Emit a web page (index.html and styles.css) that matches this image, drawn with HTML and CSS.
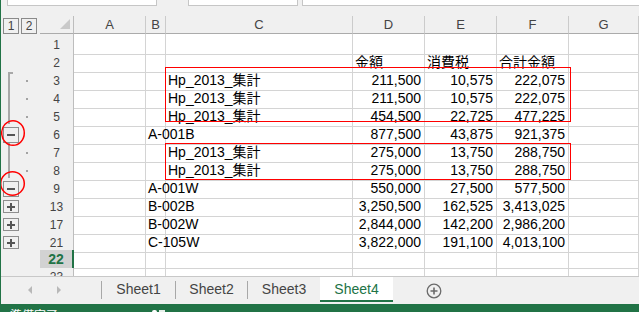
FILE: index.html
```html
<!DOCTYPE html>
<html lang="ja">
<head>
<meta charset="utf-8">
<title>Sheet4</title>
<link rel="stylesheet" href="styles.css">
</head>
<body>
<div class="app">
  <div class="topbar">
    <div class="fld f1"></div>
    <div class="fld f2"></div>
    <div class="fld f3"></div>
  </div>

  <div class="sheet">
    <div class="row hdr">
      <div class="ol levels"><span class="lvl">1</span><span class="lvl">2</span></div>
      <div class="corner"><span class="tri"></span></div>
      <div class="ch">A</div><div class="ch">B</div><div class="ch">C</div><div class="ch">D</div><div class="ch">E</div><div class="ch">F</div><div class="ch">G</div>
    </div>

    <div class="row">
      <div class="ol"></div><div class="rh">1</div>
      <div class="c"></div><div class="c"></div><div class="c"></div><div class="c"></div><div class="c"></div><div class="c"></div><div class="c"></div>
    </div>
    <div class="row">
      <div class="ol"></div><div class="rh">2</div>
      <div class="c"></div><div class="c"></div><div class="c"></div><div class="c">金額</div><div class="c">消費税</div><div class="c">合計金額</div><div class="c"></div>
    </div>
    <div class="row">
      <div class="ol"><span class="ln start"></span><span class="dot"></span></div><div class="rh">3</div>
      <div class="c"></div><div class="c"></div><div class="c">Hp_2013_集計</div><div class="c n">211,500</div><div class="c n">10,575</div><div class="c n">222,075</div><div class="c"></div>
    </div>
    <div class="row">
      <div class="ol"><span class="ln"></span><span class="dot"></span></div><div class="rh">4</div>
      <div class="c"></div><div class="c"></div><div class="c">Hp_2013_集計</div><div class="c n">211,500</div><div class="c n">10,575</div><div class="c n">222,075</div><div class="c"></div>
    </div>
    <div class="row">
      <div class="ol"><span class="ln"></span><span class="dot"></span></div><div class="rh">5</div>
      <div class="c"></div><div class="c"></div><div class="c">Hp_2013_集計</div><div class="c n">454,500</div><div class="c n">22,725</div><div class="c n">477,225</div><div class="c"></div>
    </div>
    <div class="row">
      <div class="ol"><span class="btn minus"><i class="h"></i></span></div><div class="rh">6</div>
      <div class="c"></div><div class="c">A-001B</div><div class="c"></div><div class="c n">877,500</div><div class="c n">43,875</div><div class="c n">921,375</div><div class="c"></div>
    </div>
    <div class="row">
      <div class="ol"><span class="ln"></span><span class="dot"></span></div><div class="rh">7</div>
      <div class="c"></div><div class="c"></div><div class="c">Hp_2013_集計</div><div class="c n">275,000</div><div class="c n">13,750</div><div class="c n">288,750</div><div class="c"></div>
    </div>
    <div class="row">
      <div class="ol"><span class="ln"></span><span class="dot"></span></div><div class="rh">8</div>
      <div class="c"></div><div class="c"></div><div class="c">Hp_2013_集計</div><div class="c n">275,000</div><div class="c n">13,750</div><div class="c n">288,750</div><div class="c"></div>
    </div>
    <div class="row">
      <div class="ol"><span class="btn minus"><i class="h"></i></span></div><div class="rh">9</div>
      <div class="c"></div><div class="c">A-001W</div><div class="c"></div><div class="c n">550,000</div><div class="c n">27,500</div><div class="c n">577,500</div><div class="c"></div>
    </div>
    <div class="row">
      <div class="ol"><span class="btn plus"><i class="h"></i><i class="v"></i></span></div><div class="rh">13</div>
      <div class="c"></div><div class="c">B-002B</div><div class="c"></div><div class="c n">3,250,500</div><div class="c n">162,525</div><div class="c n">3,413,025</div><div class="c"></div>
    </div>
    <div class="row">
      <div class="ol"><span class="btn plus"><i class="h"></i><i class="v"></i></span></div><div class="rh">17</div>
      <div class="c"></div><div class="c">B-002W</div><div class="c"></div><div class="c n">2,844,000</div><div class="c n">142,200</div><div class="c n">2,986,200</div><div class="c"></div>
    </div>
    <div class="row">
      <div class="ol"><span class="btn plus"><i class="h"></i><i class="v"></i></span></div><div class="rh">21</div>
      <div class="c"></div><div class="c">C-105W</div><div class="c"></div><div class="c n">3,822,000</div><div class="c n">191,100</div><div class="c n">4,013,100</div><div class="c"></div>
    </div>
    <div class="row">
      <div class="ol"></div><div class="rh sel">22</div>
      <div class="c"></div><div class="c"></div><div class="c"></div><div class="c"></div><div class="c"></div><div class="c"></div><div class="c"></div>
    </div>
    <div class="row">
      <div class="ol"></div><div class="rh r23">23</div>
      <div class="c"></div><div class="c"></div><div class="c"></div><div class="c"></div><div class="c"></div><div class="c"></div><div class="c"></div>
    </div>

    <svg class="marks" width="639" height="260" viewBox="0 0 639 260">
      <rect x="164.5" y="51.5" width="405" height="54" fill="none" stroke="#ff0000" stroke-width="1"/>
      <rect x="164.5" y="127.5" width="405" height="36" fill="none" stroke="#ff0000" stroke-width="1"/>
      <ellipse cx="12" cy="117" rx="11.3" ry="12.3" fill="none" stroke="#ff0000" stroke-width="1.5"/>
      <ellipse cx="11.5" cy="167.5" rx="11.8" ry="11.8" fill="none" stroke="#ff0000" stroke-width="1.5"/>
    </svg>
  </div>

  <div class="tabs">
    <div class="nav"><span class="arr left"></span><span class="arr right"></span></div>
    <span class="sep"></span>
    <div class="tab t1">Sheet1</div>
    <span class="sep"></span>
    <div class="tab t2">Sheet2</div>
    <span class="sep"></span>
    <div class="tab t3">Sheet3</div>
    <div class="tab active">Sheet4</div>
    <svg class="add" width="16" height="16" viewBox="0 0 16 16"><circle cx="8" cy="8" r="6.8" fill="none" stroke="#6b6b6b" stroke-width="1.3"/><path d="M8 4.5v7M4.5 8h7" stroke="#6b6b6b" stroke-width="1.6"/></svg>
  </div>

  <div class="status">
    <span class="ready">準備完了</span>
    <span class="sicon"><i></i><i></i></span>
  </div>
</div>
</body>
</html>
```

FILE: styles.css
```css
* { box-sizing: border-box; }

body {
  margin: 0;
  font-family: "Liberation Sans", "Noto Sans CJK JP", sans-serif;
}

.app {
  width: 639px;
  height: 312px;
  overflow: hidden;
  border-left: 1px solid #217346;
  background: #f0f0f0;
  display: flex;
  flex-direction: column;
}

/* top strip with the bottoms of the name box / formula bar */
.topbar {
  height: 16px;
  flex: none;
  display: flex;
  align-items: flex-start;
  padding-left: 6px;
}
.fld {
  height: 6px;
  background: #fff;
  border: 1px solid #c6c6c6;
  border-top: none;
}
.f1 { width: 150px; }
.f2 { width: 110px; margin-left: 31px; }
.f3 { flex: 1; margin-left: 4px; border-right: none; }

/* grid */
.sheet {
  position: relative;
  height: 260px;
  flex: none;
  overflow: hidden;
}
.row {
  display: grid;
  grid-template-columns: 39px 34px 72px 20px 187px 72px 72px 72px 70px;
  height: 18px;
  background: #fff;
}
.row.hdr { background: #f0f0f0; }

.ch {
  border-right: 1px solid #cbcbcb;
  border-bottom: 1px solid #ababab;
  text-align: center;
  font-size: 13px;
  line-height: 17px;
  color: #444;
}
.corner {
  border-right: 1px solid #bdbdbd;
  border-bottom: 1px solid #ababab;
  display: flex;
  justify-content: flex-end;
  align-items: flex-end;
  padding: 0 3px 4px 0;
}
.tri {
  width: 0;
  height: 0;
  border-left: 10px solid transparent;
  border-bottom: 10px solid #c9c9c9;
}
.levels {
  display: flex;
  align-items: flex-start;
  gap: 2px;
  padding: 1px 0 0 2px;
}
.lvl {
  width: 16px;
  height: 16px;
  border: 1px solid #8a8a8a;
  font-size: 12px;
  line-height: 14px;
  text-align: center;
  color: #444;
}

.ol {
  background: #f0f0f0;
  display: flex;
  align-items: center;
}
.ln {
  align-self: stretch;
  width: 5px;
  margin-left: 7px;
  border-left: 2px solid #a8a8a8;
}
.ln.start {
  margin-top: 2px;
  border-top: 2px solid #a8a8a8;
}
.dot {
  width: 2px;
  height: 2px;
  background: #a3a3a3;
  margin-left: 13px;
}
.btn {
  position: relative;
  width: 16px;
  margin-left: 2px;
  border: 1px solid #8e8e8e;
  display: flex;
  align-items: center;
  justify-content: center;
}
.btn.minus { height: 16px; }
.btn.plus { height: 13px; }
.btn .h {
  display: block;
  width: 8px;
  height: 2px;
  background: #555;
}
.btn .v {
  position: absolute;
  left: 6px;
  top: 1.5px;
  width: 2px;
  height: 8px;
  background: #555;
}

.rh {
  background: #f0f0f0;
  border-right: 1px solid #bdbdbd;
  border-bottom: 1px solid #d0d0d0;
  text-align: center;
  font-size: 12px;
  line-height: 17px;
  padding-top: 3px;
  color: #444;
}
.rh.r23 { padding-top: 1px; }
.rh.sel {
  background: #d2d2d2;
  color: #217346;
  font-weight: bold;
  font-size: 14px;
  padding-top: 1px;
  border-right: 2px solid #217346;
}

.c {
  border-right: 1px solid #d4d4d4;
  border-bottom: 1px solid #d4d4d4;
  font-size: 14px;
  line-height: 17px;
  padding: 2px 3px 0 2px;
  white-space: nowrap;
  color: #000;
}
.c.n { text-align: right; }

/* red annotations drawn over the sheet */
.marks {
  position: absolute;
  left: 0;
  top: 0;
  z-index: 2;
  pointer-events: none;
}

/* sheet tabs */
.tabs {
  height: 28px;
  flex: none;
  display: flex;
  align-items: flex-start;
  border-top: 1px solid #c8c8c8;
  font-size: 14px;
  color: #444;
}
.nav {
  width: 100px;
  height: 26px;
  display: flex;
  align-items: center;
  padding-left: 27px;
}
.arr {
  width: 0;
  height: 0;
  border-top: 4px solid transparent;
  border-bottom: 4px solid transparent;
}
.arr.left { border-right: 4px solid #b8b8b8; }
.arr.right { border-left: 4px solid #b8b8b8; margin-left: 25px; }
.sep {
  width: 1px;
  height: 18px;
  margin-top: 4px;
  background: #a8a8a8;
}
.tab {
  height: 23px;
  padding-top: 2px;
  line-height: 21px;
  text-align: center;
}
.t1 { width: 73px; }
.t2 { width: 71px; }
.t3 { width: 72px; }
.tab.active {
  width: 73px;
  height: 25px;
  background: #fff;
  color: #217346;
  border-bottom: 2px solid #217346;
}
.add {
  margin: 6px 0 0 33px;
}

/* status bar */
.status {
  height: 8px;
  flex: none;
  background: #217346;
  color: #fff;
  display: flex;
  align-items: flex-start;
  padding: 6px 0 0 9px;
  font-size: 12px;
  line-height: 12px;
  overflow: hidden;
}
.sicon {
  display: flex;
  gap: 2px;
  margin: 0 0 0 94px;
}
.sicon i {
  width: 5px;
  height: 4px;
  border-radius: 2px 2px 0 0;
  background: #fff;
}
.sicon i + i {
  width: 6px;
  border-radius: 0;
  background: #e6efe9;
}
```
